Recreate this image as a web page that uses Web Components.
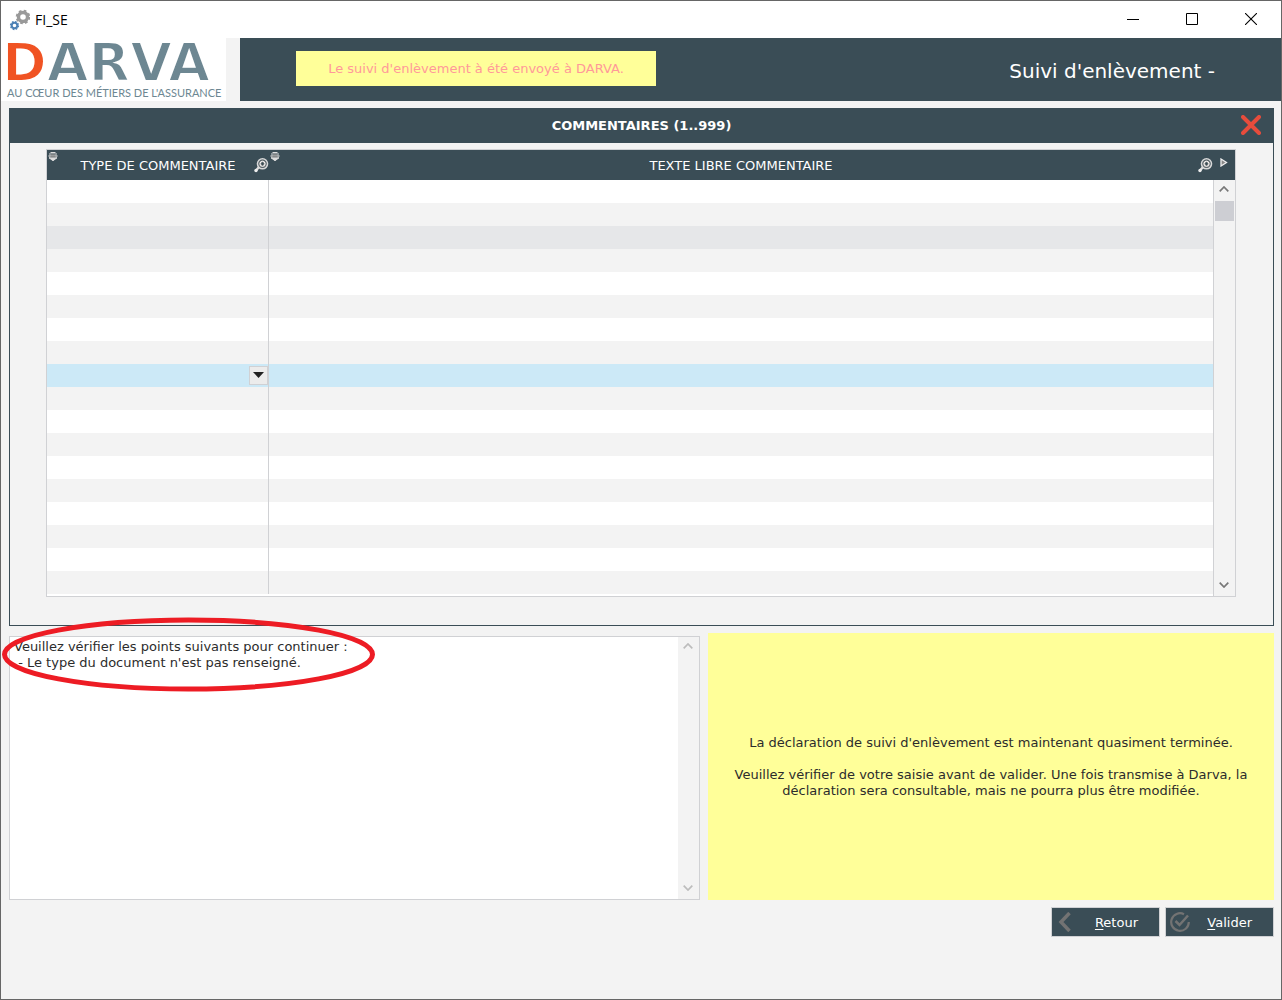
<!DOCTYPE html>
<html lang="fr">
<head>
<meta charset="utf-8">
<meta name="viewport" content="width=device-width, initial-scale=1">
<title>FI_SE</title>
<style>
  :root { --slate: #3a4d56; --page: #f3f3f3; --line: #d0d1d4; --note: #ffff99; --ink: #2c2c2c; }
  body { margin: 0; background: var(--page); color: var(--ink); font: 13px/16px "DejaVu Sans", Verdana, sans-serif; }
</style>
</head>
<body>
<app-window></app-window>
<script>
const define = (name, html, setup) => {
  const template = document.createElement('template');
  template.innerHTML = '<style>*{box-sizing:border-box}:host{display:block;box-sizing:border-box}button{font:inherit;color:inherit;border:0;margin:0;padding:0;background:none;display:flex;align-items:center;justify-content:center}svg{display:block;flex:none}</style>' + html;
  customElements.define(name, class extends HTMLElement {
    constructor() {
      super();
      this.attachShadow({ mode: 'open' }).append(template.content.cloneNode(true));
    }
    connectedCallback() { if (setup) setup(this, this.shadowRoot); }
  });
};

define('title-bar', `
<style>
  :host { display: flex; align-items: center; height: 37px; background: #fff; color: #000; padding: 0 1px 0 8px; }
  .name { font: 14px/20px "Open Sans", sans-serif; margin-left: 5px; flex: 1; }
  button { width: 59px; height: 37px; padding-bottom: 1px; }
</style>
<svg width="21" height="22" viewBox="0 0 21 22" fill="none" aria-hidden="true">
  <circle cx="14" cy="8" r="4.5" stroke="#999" stroke-width="3.4"/>
  <circle cx="14" cy="8" r="6.4" stroke="#999" stroke-width="1.8" stroke-dasharray="2.7 2.33"/>
  <circle cx="5.5" cy="16.5" r="2.8" stroke="#4d81b5" stroke-width="2"/>
  <circle cx="5.5" cy="16.5" r="4" stroke="#4d81b5" stroke-width="1.3" stroke-dasharray="1.7 1.44"/>
</svg>
<span class="name">FI_SE</span>
<button aria-label="Réduire"><svg width="12" height="12"><path d="M0 6.5h12" stroke="#000"/></svg></button>
<button aria-label="Agrandir"><svg width="12" height="12"><path d="M.5 .5h11v11h-11z" fill="none" stroke="#000"/></svg></button>
<button aria-label="Fermer"><svg width="12" height="12"><path d="M0 0l12 12M12 0L0 12" stroke="#000" stroke-width="1.1"/></svg></button>
`);

define('darva-logo', `
<style>:host { background: #fff; width: 225px; flex: none; } svg { overflow: visible; }</style>
<svg width="225" height="63" viewBox="0 0 225 63" role="img" aria-label="DARVA">
  <text x="1" y="43" font-family="DejaVu Sans, sans-serif" font-size="54" font-weight="700" fill="#6d8792" stroke="#fff" stroke-width="2"><tspan fill="#f05323">D</tspan>ARVA</text>
  <text x="6" y="59" font-family="Lato, sans-serif" font-size="11" fill="#6d8792">AU CŒUR DES MÉTIERS DE L'ASSURANCE</text>
</svg>
`);

define('page-header', `
<style>
  :host { display: flex; height: 63px; }
  .bar { flex: 1; margin-left: 14px; padding: 0 66px 2px 56px; background: var(--slate); display: flex; align-items: center; justify-content: space-between; }
  .sent { width: 360px; height: 35px; background: var(--note); color: #ff9999; display: flex; align-items: center; justify-content: center; }
  h1 { margin: 0; padding-top: 4px; font-size: 20px; line-height: 24px; font-weight: 400; color: #fff; }
</style>
<darva-logo></darva-logo>
<div class="bar"><div class="sent" role="status">Le suivi d'enlèvement à été envoyé à DARVA.</div><h1>Suivi d'enlèvement -</h1></div>
`);

define('scroll-rail', `
<style>
  :host { display: flex; flex-direction: column; align-items: center; width: 21px; background: var(--page); color: #777; }
  :host([faded]) { color: #bcbcbc; }
  button { width: 20px; height: 20px; padding: 0 2px 2px 0; }
  .thumb { width: 19px; height: 20px; margin: 1px 0; background: #cdced3; }
  :host([faded]) .thumb { visibility: hidden; }
  .down { margin-top: auto; }
</style>
<button aria-label="Défiler vers le haut"><svg width="10" height="6"><path d="M.7 5.3L5 1l4.300 4.300" fill="none" stroke="currentColor" stroke-width="1.7"/></svg></button>
<div class="thumb"></div>
<button class="down" aria-label="Défiler vers le bas"><svg width="10" height="6"><path d="M.7 .7L5 5 9.300.7" fill="none" stroke="currentColor" stroke-width="1.7"/></svg></button>
`);

define('sort-mark', `
<style>:host { position: absolute; left: 1px; top: 2px; }</style>
<svg width="10" height="9" viewBox="0 0 10 9"><path d="M2.500.5h5M1 2h8M1 5.800h8L5 8.700z" fill="#ddd" stroke="#ddd"/><path d="M.5 4h9" stroke="#c9c9c9" stroke-width="1.5"/><path d="M3 2.800h4M2.500 4.800h5" stroke="#777" stroke-width=".9"/></svg>
`);

define('find-mark', `
<style>:host { position: absolute; right: 0; top: 8px; }</style>
<button aria-label="Rechercher"><svg width="15" height="15" viewBox="0 0 15 15" fill="none"><path d="M5 9l-3 3.500" stroke="#ddd" stroke-width="2.400"/><circle cx="2" cy="12.500" r="1.700" fill="#eee"/><circle cx="8.500" cy="5.800" r="5" stroke="#d8d8d8" stroke-width="1.600"/><circle cx="8.500" cy="5.800" r="3.600" fill="#888"/><circle cx="8.500" cy="5.800" r="2.500" stroke="#fff"/><path d="M8.500 4.300v3M7 5.800h3" stroke="#3a4d56"/></svg></button>
`);

define('comments-table', `
<style>
  :host { display: flex; border: 1px solid var(--line); background: #fff; }
  table { flex: 1; width: 0; table-layout: fixed; border-spacing: 0; border-collapse: separate; margin-bottom: 2px; }
  .kind { width: 222px; }
  th { position: relative; height: 30px; padding: 2px 0 0; background: var(--slate); color: #fff; font-weight: 400; }
  td { height: 23px; padding: 0; }
  td:first-child { border-right: 1px solid var(--line); }
  tbody tr:nth-child(even) { background: var(--page); }
  tbody tr.hover { background: #e6e7e9; }
  tbody tr.current { background: #cce9f7; }
  .combo { display: grid; height: 23px; }
  .combo > * { grid-area: 1 / 1; }
  select { appearance: none; width: 100%; height: 23px; border: 0; padding: 0 4px; background: transparent; font: inherit; color: inherit; outline: 0; }
  .arrow { justify-self: end; align-self: center; width: 19px; height: 19px; border: 1px solid var(--line); background: #ececec; display: flex; align-items: center; justify-content: center; padding-bottom: 2px; pointer-events: none; }
  .side { display: flex; flex-direction: column; }
  .more { height: 30px; background: var(--slate); padding: 8px 7px; }
  scroll-rail { flex: 1; width: 22px; border-left: 1px solid var(--line); }
</style>
<table>
  <colgroup><col class="kind"><col></colgroup>
  <thead><tr><th scope="col"><sort-mark></sort-mark>TYPE DE COMMENTAIRE<find-mark></find-mark></th><th scope="col"><sort-mark></sort-mark>TEXTE LIBRE COMMENTAIRE<find-mark></find-mark></th></tr></thead>
  <tbody></tbody>
</table>
<div class="side">
  <div class="more"><button aria-label="Colonnes suivantes"><svg width="8" height="9"><path d="M1 1l5.500 3.500L1 8z" fill="#888" stroke="#eee" stroke-width="1.300"/></svg></button></div>
  <scroll-rail></scroll-rail>
</div>
`, (host, root) => {
  const body = root.querySelector('tbody');
  for (let i = 0; i < 18; i++) {
    const row = body.insertRow();
    const kind = row.insertCell();
    row.insertCell();
    if (i === 2) row.className = 'hover';
    if (i === 8) {
      row.className = 'current';
      kind.innerHTML = '<div class="combo"><select aria-label="Type de commentaire"><option></option></select><span class="arrow"><svg width="11" height="6"><path d="M0 0h11L5.500 6z" fill="#222"/></svg></span></div>';
    }
  }
});

define('comments-panel', `
<style>
  :host { border: 1px solid var(--slate); }
  header { display: grid; grid-template-columns: 36px 1fr 36px; align-items: center; height: 34px; background: var(--slate); color: #fff; }
  h2 { grid-column: 2; margin: 0; font-size: 13px; line-height: 16px; text-align: center; }
  button { width: 28px; height: 28px; padding-bottom: 2px; }
  .body { padding: 6px 37px 28px 36px; }
</style>
<header><h2>COMMENTAIRES (1..999)</h2><button aria-label="Fermer le panneau"><svg width="20" height="20"><path d="M2 2l16 16M18 2L2 18" stroke="#e74c3c" stroke-width="4" stroke-linecap="round"/></svg></button></header>
<div class="body"><slot></slot></div>
`);

define('message-box', `
<style>
  :host { display: flex; position: relative; border: 1px solid var(--line); background: #fff; }
  textarea { flex: 1; min-width: 0; border: 0; margin: 0; padding: 2px 4px; resize: none; outline: 0; background: none; font: inherit; color: inherit; overflow: hidden; }
  .ring { position: absolute; left: -8px; top: -21px; pointer-events: none; z-index: 1; }
</style>
<textarea readonly aria-label="Points à vérifier">Veuillez vérifier les points suivants pour continuer :
 - Le type du document n'est pas renseigné.</textarea>
<scroll-rail faded></scroll-rail>
<svg class="ring" width="374" height="76" aria-hidden="true"><ellipse cx="186.500" cy="38.500" rx="184" ry="34.500" fill="none" stroke="#ed1c24" stroke-width="5"/></svg>
`);

define('final-note', `
<style>
  :host { display: flex; flex-direction: column; justify-content: center; gap: 16px; padding: 0 16px; background: var(--note); text-align: center; }
  ::slotted(p) { margin: 0; }
</style>
<slot></slot>
`);

define('action-button', `
<style>
  button { width: 109px; height: 30px; border: 1px solid var(--line); background: var(--slate); color: #fff; padding: 0 21px 0 4px; justify-content: space-between; }
  .label { padding-top: 2px; }
  ::slotted(u) { text-underline-offset: 2px; }
</style>
<button><span class="icon"></span><span class="label"><slot></slot></span></button>
`, (host, root) => {
  root.querySelector('.icon').innerHTML = '<svg width="20" height="20" viewBox="0 0 20 20" fill="none" stroke="#737373">' + (host.getAttribute('icon') === 'back'
    ? '<path d="M13.500 1L5 10l8.500 9" stroke-width="3.500"/>'
    : '<path d="M14 2.200A8.800 8.800 0 1 0 18.800 10" stroke-width="2.200"/><path d="M5.500 9l4 4L18 3.500" stroke-width="2.500"/>') + '</svg>';
});

define('app-window', `
<style>
  :host { min-height: 100vh; border: 1px solid #666; background: var(--page); }
  main { padding: 7px 7px 0 8px; display: flex; flex-direction: column; }
  .lower { display: grid; grid-template-columns: 691fr 566fr; column-gap: 8px; margin-top: 7px; min-height: 267px; }
  message-box { margin-top: 3px; }
  .actions { display: flex; justify-content: flex-end; gap: 5px; margin-top: 7px; }
</style>
<title-bar></title-bar>
<page-header></page-header>
<main>
  <comments-panel><comments-table></comments-table></comments-panel>
  <div class="lower">
    <message-box></message-box>
    <final-note><p>La déclaration de suivi d'enlèvement est maintenant quasiment terminée.</p><p>Veuillez vérifier de votre saisie avant de valider. Une fois transmise à Darva, la déclaration sera consultable, mais ne pourra plus être modifiée.</p></final-note>
  </div>
  <div class="actions"><action-button icon="back"><u>R</u>etour</action-button><action-button icon="check"><u>V</u>alider</action-button></div>
</main>
`);
</script>
</body>
</html>
